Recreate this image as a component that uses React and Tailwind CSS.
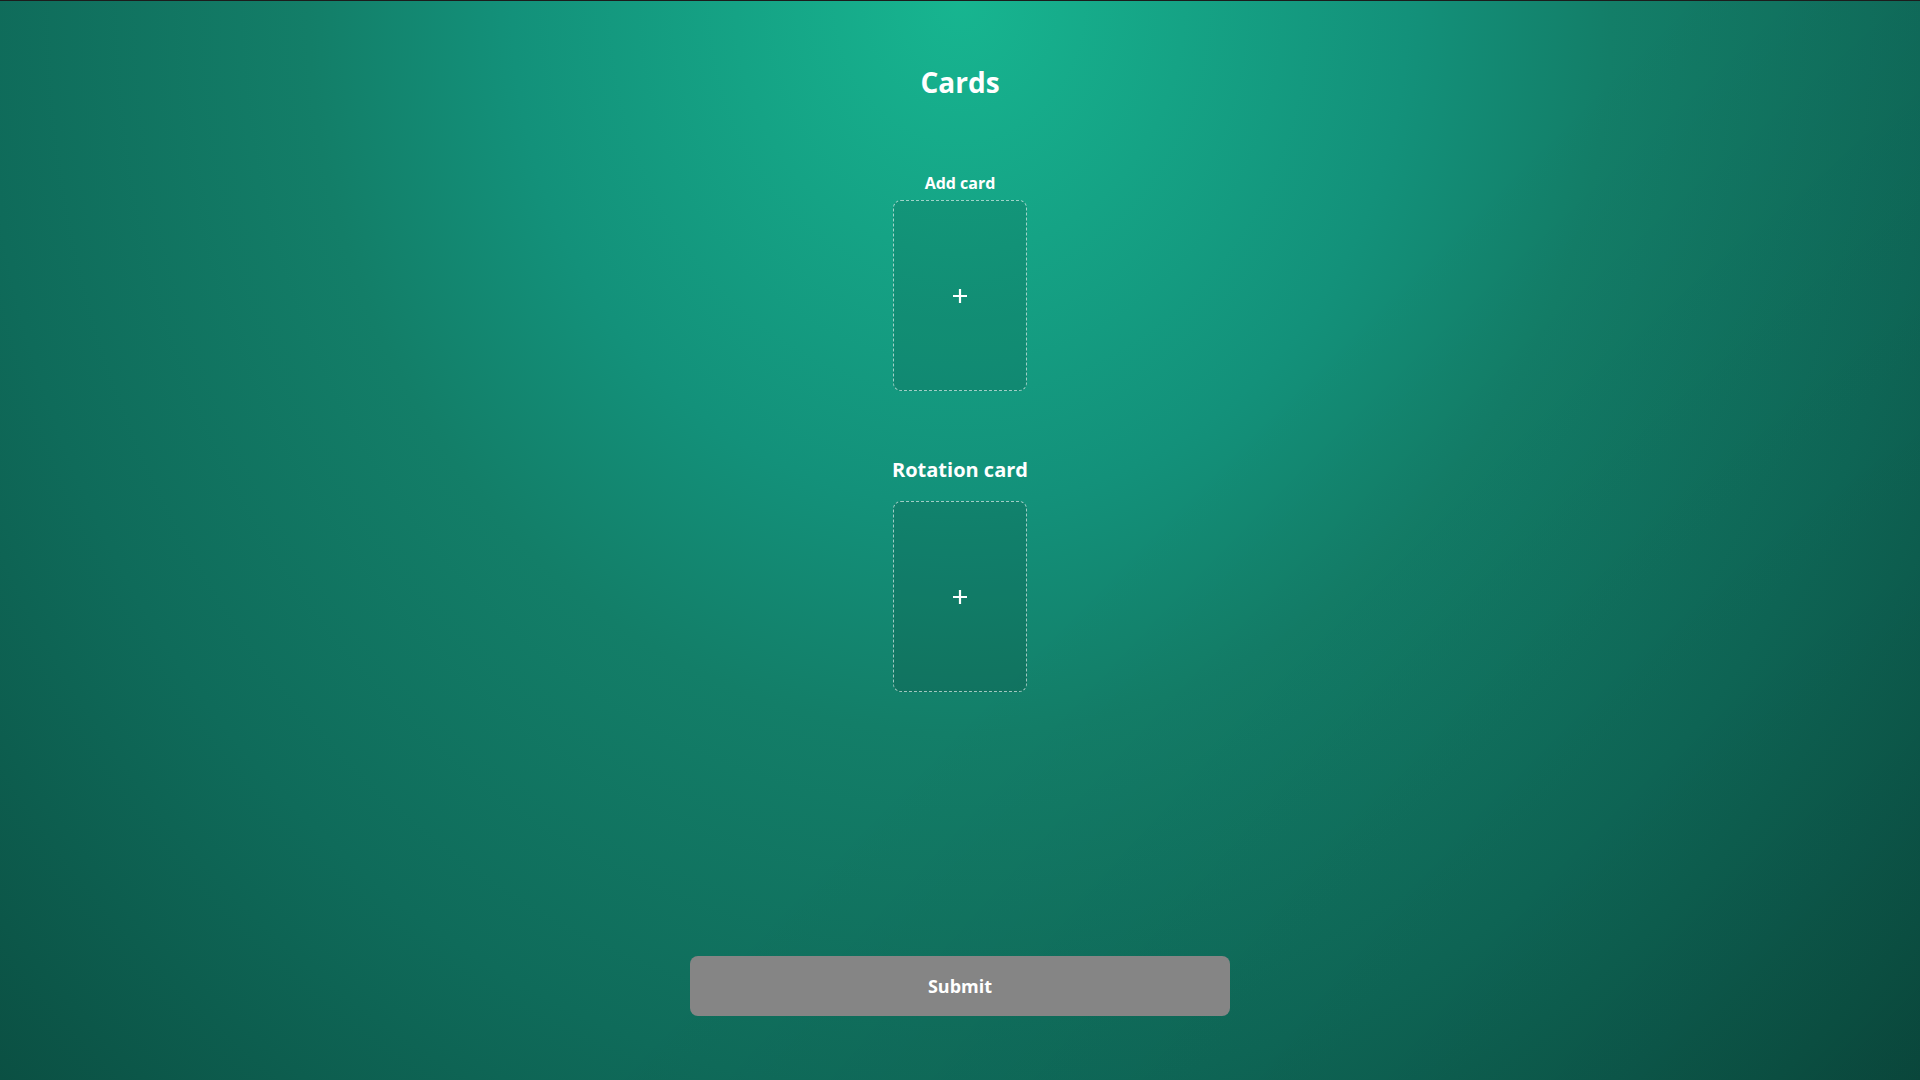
import { useState } from "react";

function CardSlot({ onClick }) {
    return (
        <button
            onClick={onClick}
            className="w-[134px] h-[191px] rounded-lg border border-dashed border-white/60 bg-black/10 flex items-center justify-center cursor-pointer"
        >
            <svg width="16" height="16" viewBox="0 0 16 16" fill="none">
                <path d="M8 1v14M1 8h14" stroke="white" strokeWidth="2.2" />
            </svg>
        </button>
    );
}

export default function App() {
    const [cards, setCards] = useState({ add: null, rotation: null });

    return (
        <div
            className="min-h-screen w-full border-t border-[#1c1c1c] flex flex-col items-center text-white font-['Open_Sans',sans-serif] bg-[linear-gradient(135deg,transparent_55%,rgba(0,0,0,0.12)_100%),radial-gradient(ellipse_at_50%_0%,#17b590_0%,#13917a_33%,#137e68_48%,#0f6b5a_72%,#0b5043_100%)]"
        >
            <h1 className="mt-[64px] text-[28px] leading-[34px] font-bold">Cards</h1>

            <div className="mt-[74px] flex flex-col items-center">
                <h2 className="text-[16px] leading-[20px] font-bold mb-[7px]">Add card</h2>
                <CardSlot onClick={() => setCards({ ...cards, add: "new" })} />
            </div>

            <div className="mt-[66px] flex flex-col items-center">
                <h2 className="text-[20px] leading-[26px] font-bold mb-[18px]">Rotation card</h2>
                <CardSlot onClick={() => setCards({ ...cards, rotation: "new" })} />
            </div>

            <button className="mt-[264px] w-[540px] h-[60px] rounded-lg bg-[#858585] text-white text-[18px] font-bold cursor-pointer">
                Submit
            </button>
        </div>
    );
}
